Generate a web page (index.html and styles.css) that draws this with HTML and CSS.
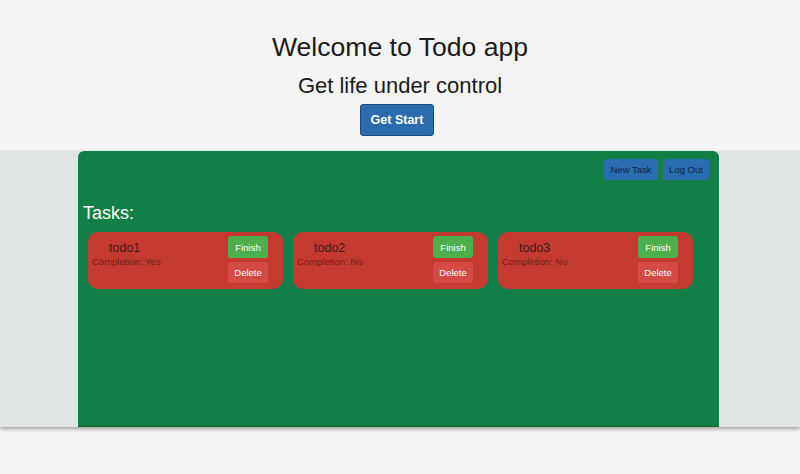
FILE: index.html
```html
<!DOCTYPE html>
<html>
<head>
<meta charset="utf-8">
<link rel="stylesheet" href="styles.css">
</head>
<body>
<header class="hero">
  <h1 class="title">Welcome to Todo app</h1>
  <h2 class="subtitle">Get life under control</h2>
  <button class="start-btn">Get Start</button>
</header>
<section class="band">
  <div class="board">
    <div class="toolbar">
      <button class="tool-btn">New Task</button>
      <button class="tool-btn">Log Out</button>
    </div>
    <h3 class="tasks-title">Tasks:</h3>
    <div class="cards">
      <div class="card">
        <div class="card-info">
          <div class="card-name">todo1</div>
          <div class="card-status">Completion: Yes</div>
        </div>
        <div class="card-actions">
          <button class="finish-btn">Finish</button>
          <button class="delete-btn">Delete</button>
        </div>
      </div>
      <div class="card">
        <div class="card-info">
          <div class="card-name">todo2</div>
          <div class="card-status">Completion: No</div>
        </div>
        <div class="card-actions">
          <button class="finish-btn">Finish</button>
          <button class="delete-btn">Delete</button>
        </div>
      </div>
      <div class="card">
        <div class="card-info">
          <div class="card-name">todo3</div>
          <div class="card-status">Completion: No</div>
        </div>
        <div class="card-actions">
          <button class="finish-btn">Finish</button>
          <button class="delete-btn">Delete</button>
        </div>
      </div>
    </div>
  </div>
</section>
</body>
</html>
```
FILE: styles.css
```css
* { box-sizing: border-box; }
html, body { margin: 0; padding: 0; }
body {
  background: #f4f4f4;
  font-family: "Liberation Sans", Arial, sans-serif;
  width: 800px;
  height: 474px;
  overflow: hidden;
}
.hero {
  display: flex;
  flex-direction: column;
  align-items: center;
  padding-top: 32px;
  height: 151px;
}
.title {
  margin: 0;
  font-size: 26.6px;
  font-weight: normal;
  color: #1b1b1b;
  line-height: 30px;
}
.subtitle {
  margin: 11px 0 0;
  font-size: 22px;
  font-weight: normal;
  color: #1b1b1b;
  line-height: 26px;
}
.start-btn {
  margin-top: 5px;
  width: 74px;
  height: 32px;
  background: #2c6bb0;
  border: 1px solid #1d4b7e;
  border-radius: 3px;
  color: #ffffff;
  font-family: "Liberation Sans", Arial, sans-serif;
  font-size: 12.5px;
  font-weight: bold;
  padding: 0;
  margin-left: -6px;
}
.band {
  height: 276px;
  background: #e0e4e5;
  display: flex;
  justify-content: center;
  box-shadow: 0 2px 4px rgba(0,0,0,0.35);
  padding-right: 3px;
}
.board {
  width: 641px;
  background: #128046;
  border-radius: 6px 6px 0 0;
  border-bottom: 1px solid #0d6a38;
  padding: 8px 10px 0 5px;
}
.toolbar {
  display: flex;
  justify-content: flex-end;
  gap: 5px;
}
.tool-btn {
  height: 21px;
  padding: 0;
  white-space: nowrap;
  background: #2a6cb2;
  border: none;
  border-radius: 3px;
  color: #14253d;
  font-family: "Liberation Sans", Arial, sans-serif;
  font-size: 9.5px;
}
.toolbar .tool-btn:first-child { width: 54px; }
.toolbar .tool-btn:last-child { width: 46px; }
.tasks-title {
  margin: 23px 0 0;
  font-size: 18px;
  font-weight: normal;
  color: #ffffff;
  line-height: 20px;
}
.cards {
  display: flex;
  gap: 10px;
  margin-top: 9px;
  padding-left: 5px;
}
.card {
  width: 195px;
  height: 57px;
  background: #c43a30;
  border-radius: 10px;
  display: flex;
  justify-content: space-between;
  padding: 4px 15px 0 4px;
}
.card-info {
  padding-top: 5px;
}
.card-name {
  font-size: 12.5px;
  color: #3b1a18;
  padding-left: 17px;
  line-height: 15px;
}
.card-status {
  font-size: 9.5px;
  color: #6e1f1a;
  margin-top: 0;
  line-height: 11px;
}
.card-actions {
  display: flex;
  flex-direction: column;
  gap: 4px;
}
.finish-btn, .delete-btn {
  width: 40px;
  height: 22px;
  border: none;
  border-radius: 3px;
  color: #ffffff;
  font-family: "Liberation Sans", Arial, sans-serif;
  font-size: 9.5px;
  padding: 0;
}
.finish-btn { background: #4cae4c; }
.delete-btn { background: #d64a45; height: 21px; }
```
